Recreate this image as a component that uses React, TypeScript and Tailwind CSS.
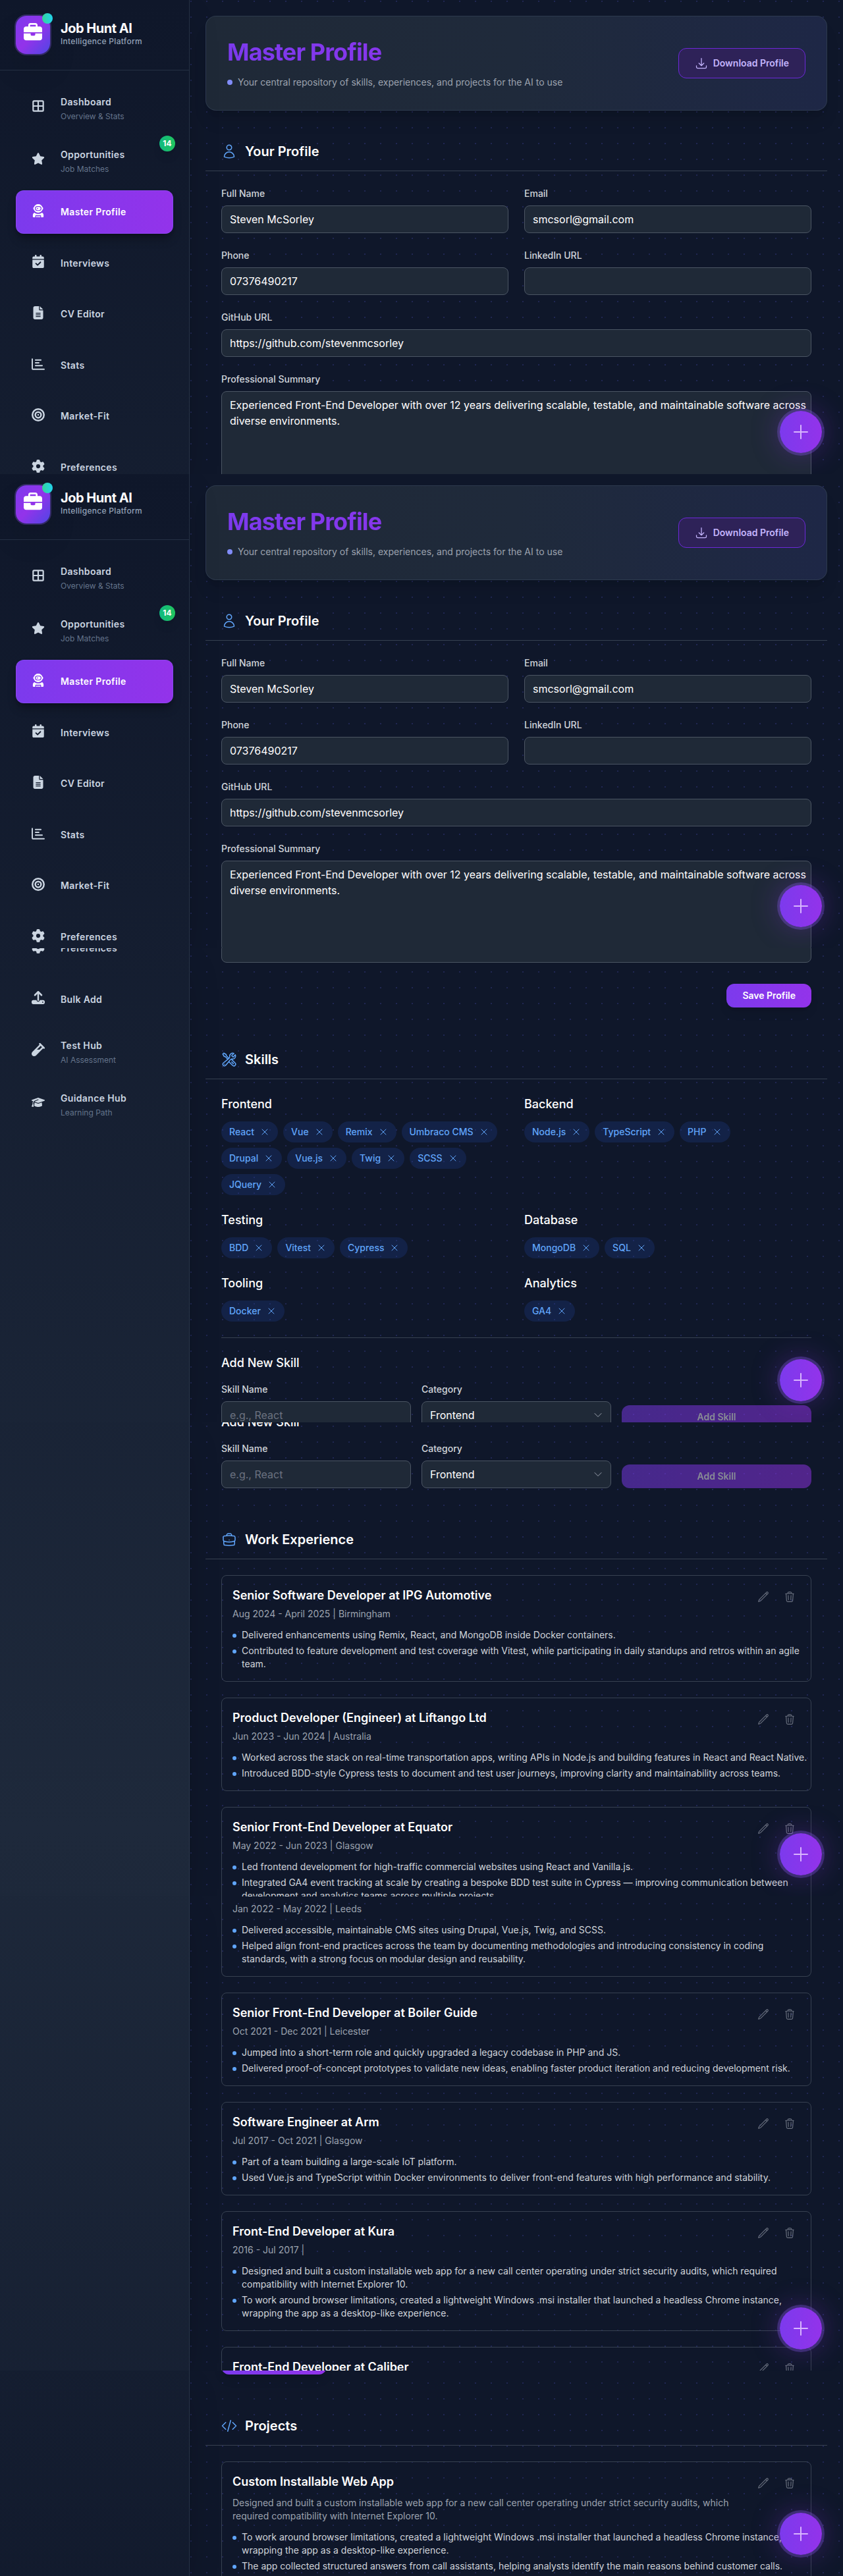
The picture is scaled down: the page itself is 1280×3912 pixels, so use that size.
import { useId, type ComponentType, type ReactNode } from "react";
import {
  FaBriefcase,
  FaBullseye,
  FaCalendarCheck,
  FaFileLines,
  FaGear,
  FaGraduationCap,
  FaStar,
  FaUpload,
  FaVial,
} from "react-icons/fa6";
import {
  HiOutlineArrowDownTray,
  HiOutlineBriefcase,
  HiOutlineChevronDown,
  HiOutlineCodeBracket,
  HiOutlinePencil,
  HiOutlinePlus,
  HiOutlineTrash,
  HiOutlineUser,
  HiOutlineWrenchScrewdriver,
  HiOutlineXMark,
} from "react-icons/hi2";

type IconComponent = ComponentType<{ className?: string }>;

function GridIcon({ className }: { className?: string }) {
  return (
    <svg viewBox="0 0 512 512" className={className} fill="none" stroke="currentColor" strokeWidth="56" aria-hidden="true">
      <rect x="60" y="60" width="392" height="392" rx="36" />
      <path d="M256 60v392M60 256h392" />
    </svg>
  );
}

function BarsIcon({ className }: { className?: string }) {
  return (
    <svg
      viewBox="0 0 512 512"
      className={className}
      fill="none"
      stroke="currentColor"
      strokeWidth="50"
      strokeLinecap="round"
      strokeLinejoin="round"
      aria-hidden="true"
    >
      <path d="M26 58v356c0 24 16 40 40 40h420M152 96h208M152 206h128M152 316h258" />
    </svg>
  );
}

function AstronautIcon({ className }: { className?: string }) {
  return (
    <svg viewBox="0 0 512 512" className={className} fill="currentColor" aria-hidden="true">
      <path
        fillRule="evenodd"
        d="M256 0c86 0 150 54 168 122 18 6 22 18 22 46s-4 40-22 46c-18 66-82 118-168 118S106 280 88 214c-18-6-22-18-22-46s4-40 22-46C106 54 170 0 256 0ZM216 76c-54 0-88 36-88 92s34 96 88 96h80c54 0 88-40 88-96s-34-92-88-92h-80Z"
      />
      <path
        fillRule="evenodd"
        d="M220 108h72c38 0 60 24 60 60s-22 66-60 66h-72c-38 0-60-30-60-66s22-60 60-60Zm8 24-12 26-26 12 26 12 12 26 12-26 26-12-26-12-12-26Z"
      />
      <path
        fillRule="evenodd"
        d="M108 330c42 34 92 48 148 48s106-14 148-48c36 16 60 52 60 96v54c0 18-14 32-32 32h-64v-64c0-12-8-20-20-20H164c-12 0-20 8-20 20v64H80c-18 0-32-14-32-32v-54c0-44 24-80 60-96Z"
      />
      <path d="M180 464h40v48h-40zM236 464h40v48h-40zM292 464h40v48h-40z" />
    </svg>
  );
}

type NavEntry = { label: string; sub?: string; icon: IconComponent; badge?: string; active?: boolean };

const primaryNav: NavEntry[] = [
  { label: "Dashboard", sub: "Overview & Stats", icon: GridIcon },
  { label: "Opportunities", sub: "Job Matches", icon: FaStar, badge: "14" },
  { label: "Master Profile", icon: AstronautIcon, active: true },
  { label: "Interviews", icon: FaCalendarCheck },
  { label: "CV Editor", icon: FaFileLines },
  { label: "Stats", icon: BarsIcon },
  { label: "Market-Fit", icon: FaBullseye },
  { label: "Preferences", icon: FaGear },
];

const secondaryNav: NavEntry[] = [
  { label: "Preferences", icon: FaGear },
  { label: "Bulk Add", icon: FaUpload },
  { label: "Test Hub", sub: "AI Assessment", icon: FaVial },
  { label: "Guidance Hub", sub: "Learning Path", icon: FaGraduationCap },
];

const skillGroups = [
  { name: "Frontend", skills: ["React", "Vue", "Remix", "Umbraco CMS", "Drupal", "Vue.js", "Twig", "SCSS", "JQuery"] },
  { name: "Backend", skills: ["Node.js", "TypeScript", "PHP"] },
  { name: "Testing", skills: ["BDD", "Vitest", "Cypress"] },
  { name: "Database", skills: ["MongoDB", "SQL"] },
  { name: "Tooling", skills: ["Docker"] },
  { name: "Analytics", skills: ["GA4"] },
];

type Job = { title: string; meta: string; points: string[] };

const recentJobs: Job[] = [
  {
    title: "Senior Software Developer at IPG Automotive",
    meta: "Aug 2024 - April 2025 | Birmingham",
    points: [
      "Delivered enhancements using Remix, React, and MongoDB inside Docker containers.",
      "Contributed to feature development and test coverage with Vitest, while participating in daily standups and retros within an agile team.",
    ],
  },
  {
    title: "Product Developer (Engineer) at Liftango Ltd",
    meta: "Jun 2023 - Jun 2024 | Australia",
    points: [
      "Worked across the stack on real-time transportation apps, writing APIs in Node.js and building features in React and React Native.",
      "Introduced BDD-style Cypress tests to document and test user journeys, improving clarity and maintainability across teams.",
    ],
  },
  {
    title: "Senior Front-End Developer at Equator",
    meta: "May 2022 - Jun 2023 | Glasgow",
    points: [
      "Led frontend development for high-traffic commercial websites using React and Vanilla.js.",
      "Integrated GA4 event tracking at scale by creating a bespoke BDD test suite in Cypress — improving communication between development and analytics teams across multiple projects.",
    ],
  },
];

const earlierJobs: Job[] = [
  {
    title: "Senior Front-End Developer at Boiler Guide",
    meta: "Oct 2021 - Dec 2021 | Leicester",
    points: [
      "Jumped into a short-term role and quickly upgraded a legacy codebase in PHP and JS.",
      "Delivered proof-of-concept prototypes to validate new ideas, enabling faster product iteration and reducing development risk.",
    ],
  },
  {
    title: "Software Engineer at Arm",
    meta: "Jul 2017 - Oct 2021 | Glasgow",
    points: [
      "Part of a team building a large-scale IoT platform.",
      "Used Vue.js and TypeScript within Docker environments to deliver front-end features with high performance and stability.",
    ],
  },
  {
    title: "Front-End Developer at Kura",
    meta: "2016 - Jul 2017 |",
    points: [
      "Designed and built a custom installable web app for a new call center operating under strict security audits, which required compatibility with Internet Explorer 10.",
      "To work around browser limitations, created a lightweight Windows .msi installer that launched a headless Chrome instance, wrapping the app as a desktop-like experience.",
    ],
  },
  { title: "Front-End Developer at Caliber", meta: "", points: [] },
];

/* ---------- Sidebar ---------- */

function NavItem({ label, sub, icon: Icon, badge, active }: NavEntry) {
  return (
    <a
      href="#"
      className={
        active
          ? "relative flex items-center gap-6 rounded-xl border border-[#8b5cf6]/40 bg-linear-to-r/srgb from-[#7c3aed] to-[#9333ea] px-[23px] py-[19px] text-white shadow-lg shadow-black/30"
          : sub
            ? "relative flex items-center gap-6 rounded-xl border border-transparent px-[23px] py-[11px] text-[#cbd5e1]"
            : "relative flex items-center gap-6 rounded-xl border border-transparent px-[23px] py-[19px] text-[#cbd5e1]"
      }
    >
      <Icon className="mb-1 size-5 shrink-0" />
      {sub ? (
        <span className="flex flex-col pt-1">
          <span className="text-sm leading-5 font-semibold tracking-wide">{label}</span>
          <span className="mt-1 text-xs leading-4 text-[#64748b]">{sub}</span>
        </span>
      ) : (
        <span className="block text-base leading-[1.6]">
          <span className="text-sm leading-none font-semibold tracking-wide">{label}</span>
        </span>
      )}
      {badge && (
        <span className="absolute -top-1 -right-1 flex size-6 items-center justify-center rounded-full bg-linear-to-r/srgb from-[#10b981] to-[#22c55e] text-xs font-bold text-white shadow-lg">
          {badge}
        </span>
      )}
    </a>
  );
}

function Brand() {
  return (
    <div className="flex items-center gap-4 border-b border-[#334155]/60 p-6">
      <div className="relative flex h-[58px] w-[52px] shrink-0 justify-center rounded-2xl bg-linear-to-br/srgb from-[#7c3aed] via-[#9333ea] to-[#4f46e5] pt-[11px] shadow-2xl ring-2 ring-[#8b5cf6]/30">
        <FaBriefcase className="size-7 text-white" />
        <span className="absolute -top-1 -right-1 size-4 rounded-full bg-linear-to-r/srgb from-[#34d399] to-[#22d3ee]" />
      </div>
      <div className="mb-1">
        <div className="text-xl leading-6 font-bold tracking-tight text-white">Job Hunt AI</div>
        <div className="text-xs leading-4 font-medium tracking-wide text-[#94a3b8]">Intelligence Platform</div>
      </div>
    </div>
  );
}

function Nav({ items }: { items: NavEntry[] }) {
  return (
    <nav className="flex flex-col gap-3 px-6">
      {items.map((item) => (
        <NavItem key={item.label} {...item} />
      ))}
    </nav>
  );
}

/* ---------- Panels ---------- */

function Panel({ position, sidebar, children, short }: { position: string; sidebar?: ReactNode; children: ReactNode; short?: boolean }) {
  return (
    <div
      className={`${short ? "h-[312px]" : "h-[720px]"} relative flex overflow-hidden bg-[radial-gradient(circle_at_2px_2px,rgba(99,102,241,0.2)_1px,transparent_0)] bg-[length:24px_24px] ${position}`}
    >
      <aside
        className={`relative z-10 w-72 shrink-0 border-r border-[#334155]/60 bg-linear-to-b/srgb from-[#0f172a] via-[#1e293b] to-[#0f172a] bg-[length:100%_3916px] shadow-2xl ${position}`}
      >
        {sidebar}
      </aside>
      <main className="min-w-0 flex-1 px-6">{children}</main>
      <button
        type="button"
        aria-label="Quick add"
        className="absolute right-8 bottom-8 z-20 flex size-16 items-center justify-center rounded-full bg-linear-to-r/srgb from-[#7c3aed] to-[#9333ea] text-[#d8b4fe] shadow-[0_0_44px_rgba(147,51,234,0.35)] ring-4 ring-[#8b5cf6]/30"
      >
        <HiOutlinePlus className="size-8" />
      </button>
    </div>
  );
}

function SectionTitle({ icon: Icon, children }: { icon: IconComponent; children: ReactNode }) {
  return (
    <div className="flex h-[60px] items-center gap-3 border-b border-[#374151] px-6">
      <Icon className="size-6 text-[#60a5fa]" />
      <h2 className="text-xl leading-7 font-semibold text-white">{children}</h2>
    </div>
  );
}

const fieldClass =
  "block w-full rounded-lg border border-[#4b5563] bg-[#1f2937] py-2 pl-3 text-base leading-6 text-white placeholder:text-[#6b7280] outline-none";
const labelClass = "mb-2 block text-sm leading-5 font-medium text-[#d1d5db]";

function Field({ label, value, placeholder, wide }: { label: string; value?: string; placeholder?: string; wide?: boolean }) {
  const id = useId();
  return (
    <div className={wide ? "col-span-2" : ""}>
      <label htmlFor={id} className={labelClass}>
        {label}
      </label>
      <input id={id} className={`${fieldClass} h-[42px] pr-3`} defaultValue={value} placeholder={placeholder} />
    </div>
  );
}

function HeroCard() {
  return (
    <header className="flex h-36 items-start justify-between rounded-2xl border border-[#334155]/70 bg-linear-to-r/srgb from-[#1f2937] via-[#1f2a3b] to-[#1e2746] px-8 shadow-xl">
      <div className="pt-[34px]">
        <h1 className="bg-linear-to-r/srgb from-[#7c3aed] to-[#9333ea] bg-clip-text text-4xl leading-10 font-bold tracking-tight text-transparent">
          Master Profile
        </h1>
        <p className="mt-4 flex items-center gap-2 text-sm leading-5 text-[#9ca3af]">
          <span className="size-2 rounded-full bg-[#818cf8]" />
          Your central repository of skills, experiences, and projects for the AI to use
        </p>
      </div>
      <button
        type="button"
        className="mt-12 flex h-[46px] items-center gap-2 rounded-xl border border-[#6d28d9] bg-[#2e2258] px-6 text-sm font-semibold text-[#c4b5fd]"
      >
        <HiOutlineArrowDownTray className="size-5" />
        Download Profile
      </button>
    </header>
  );
}

function ProfileForm() {
  const id = useId();
  return (
    <section className="mt-8">
      <SectionTitle icon={HiOutlineUser}>Your Profile</SectionTitle>
      <form className="grid grid-cols-2 gap-6 p-6">
        <Field label="Full Name" value="Steven McSorley" />
        <Field label="Email" value="smcsorl@gmail.com" />
        <Field label="Phone" value="07376490217" />
        <Field label="LinkedIn URL" />
        <Field label="GitHub URL" value="https://github.com/stevenmcsorley" wide />
        <div className="col-span-2">
          <label htmlFor={id} className={labelClass}>
            Professional Summary
          </label>
          <textarea
            id={id}
            rows={5}
            className={`${fieldClass} resize-none`}
            defaultValue="Experienced Front-End Developer with over 12 years delivering scalable, testable, and maintainable software across diverse environments."
          />
        </div>
      </form>
    </section>
  );
}

function Chip({ children }: { children: string }) {
  return (
    <li className="flex h-8 items-center gap-2 rounded-full bg-[#1e3a8a]/30 px-3 text-sm leading-5 font-medium text-[#60a5fa]">
      {children}
      <button type="button" aria-label={`Remove ${children}`}>
        <HiOutlineXMark className="size-4" />
      </button>
    </li>
  );
}

function SkillForm() {
  const id = useId();
  return (
    <form className="px-6">
      <h3 className="text-lg leading-7 font-medium text-white">Add New Skill</h3>
      <div className="mt-4 grid grid-cols-3 items-end gap-4">
        <Field label="Skill Name" placeholder="e.g., React" />
        <div>
          <label htmlFor={id} className={labelClass}>
            Category
          </label>
          <div className="relative">
            <select id={id} className={`${fieldClass} h-[42px] appearance-none pr-10`} defaultValue="Frontend">
              {skillGroups.map((g) => (
                <option key={g.name}>{g.name}</option>
              ))}
            </select>
            <HiOutlineChevronDown className="pointer-events-none absolute top-[13px] right-3 size-4 text-[#9ca3af]" />
          </div>
        </div>
        <button
          type="button"
          disabled
          className="h-9 rounded-xl bg-linear-to-r/srgb from-[#7c3aed] to-[#9333ea] text-sm font-semibold text-white opacity-50"
        >
          Add Skill
        </button>
      </div>
    </form>
  );
}

function Skills() {
  return (
    <section>
      <SectionTitle icon={HiOutlineWrenchScrewdriver}>Skills</SectionTitle>
      <div className="grid grid-cols-2 gap-6 p-6">
        {skillGroups.map((group) => (
          <div key={group.name}>
            <h3 className="mb-3 text-lg leading-7 font-medium text-white">{group.name}</h3>
            <ul className="flex flex-wrap gap-2">
              {group.skills.map((s) => (
                <Chip key={s}>{s}</Chip>
              ))}
            </ul>
          </div>
        ))}
      </div>
      <div className="mx-6 mb-6 border-t border-[#374151]" />
      <SkillForm />
    </section>
  );
}

function Points({ items }: { items: string[] }) {
  return (
    <ul className="mt-3 -mr-4 flex flex-col gap-1">
      {items.map((p) => (
        <li key={p} className="flex gap-2 text-sm leading-5 text-[#d1d5db]">
          <span className="mt-2 size-1.5 shrink-0 rounded-full bg-[#60a5fa]" />
          {p}
        </li>
      ))}
    </ul>
  );
}

function EntryCard({ title, meta, description, points }: { title: string; meta?: string; description?: string; points: string[] }) {
  return (
    <article className="rounded-lg border border-[#374151] p-4">
      <div className="flex items-start justify-between gap-4">
        <div className="min-w-0 flex-1">
          <h3 className="text-lg leading-7 font-semibold text-white">{title}</h3>
          {meta && <p className="mt-1 text-sm leading-5 text-[#9ca3af]">{meta}</p>}
          {description && <p className="mt-2 text-sm leading-5 text-[#9ca3af]">{description}</p>}
        </div>
        <div className="flex gap-2 text-[#6b7280]">
          <button type="button" aria-label={`Edit ${title}`} className="flex size-8 items-center justify-center">
            <HiOutlinePencil className="size-[18px]" />
          </button>
          <button type="button" aria-label={`Delete ${title}`} className="flex size-8 items-center justify-center">
            <HiOutlineTrash className="size-[18px]" />
          </button>
        </div>
      </div>
      <Points items={points} />
    </article>
  );
}

export default function App() {
  return (
    <div className="min-h-screen bg-[#0f172a] font-['Inter',sans-serif] text-white">
      <Panel
        position="bg-position-[0_0]"
        sidebar={
          <>
            <Brand />
            <div className="pt-[22px]">
              <Nav items={primaryNav} />
            </div>
          </>
        }
      >
        <div className="pt-6">
          <HeroCard />
          <ProfileForm />
        </div>
      </Panel>

      <Panel
        position="bg-position-[0_-7px]"
        sidebar={
          <div className="-mt-[7px]">
            <Brand />
            <div className="pt-[22px]">
              <Nav items={primaryNav} />
            </div>
          </div>
        }
      >
        <div className="pt-[17px]">
          <HeroCard />
          <ProfileForm />
        </div>
      </Panel>

      <Panel
        position="bg-position-[0_-710px]"
        sidebar={
          <div className="-mt-[33px]">
            <Nav items={secondaryNav} />
          </div>
        }
      >
        <div className="-mt-5 px-6 pb-6">
          <textarea aria-label="Summary continued" className={`${fieldClass} h-[42px] resize-none`} />
          <div className="mt-8 flex justify-end">
            <button
              type="button"
              className="h-9 rounded-xl bg-linear-to-r/srgb from-[#7c3aed] to-[#9333ea] px-6 text-sm font-semibold text-white shadow-lg"
            >
              Save Profile
            </button>
          </div>
        </div>
        <div className="pt-[25px]">
          <Skills />
        </div>
      </Panel>

      <Panel position="bg-position-[0_-1340px]">
        <div className="-mt-3.5">
          <SkillForm />
        </div>
        <section className="mt-12">
          <SectionTitle icon={HiOutlineBriefcase}>Work Experience</SectionTitle>
          <div className="flex flex-col gap-6 p-6">
            {recentJobs.map((job) => (
              <EntryCard key={job.title} {...job} />
            ))}
          </div>
        </section>
      </Panel>

      <Panel position="bg-position-[0_-2151px]">
        <section className="flex flex-col gap-6 px-6">
          <article className="rounded-b-lg border border-t-0 border-[#374151] px-4 pt-[9px] pb-4">
            <p className="text-sm leading-5 text-[#9ca3af]">Jan 2022 - May 2022 | Leeds</p>
            <Points
              items={[
                "Delivered accessible, maintainable CMS sites using Drupal, Vue.js, Twig, and SCSS.",
                "Helped align front-end practices across the team by documenting methodologies and introducing consistency in coding standards, with a strong focus on modular design and reusability.",
              ]}
            />
          </article>
          {earlierJobs.map((job) => (
            <EntryCard key={job.title} {...job} />
          ))}
        </section>
      </Panel>

      <Panel position="bg-position-[0_-3199px]" short>
        <div className="px-6">
          <button
            type="button"
            aria-label="Add experience"
            className="-mt-[30px] block h-9 w-40 rounded-xl bg-linear-to-r/srgb from-[#7c3aed] to-[#9333ea] shadow-lg"
          />
        </div>
        <section className="mt-12">
          <SectionTitle icon={HiOutlineCodeBracket}>Projects</SectionTitle>
          <div className="p-6">
            <EntryCard
              title="Custom Installable Web App"
              description="Designed and built a custom installable web app for a new call center operating under strict security audits, which required compatibility with Internet Explorer 10."
              points={[
                "To work around browser limitations, created a lightweight Windows .msi installer that launched a headless Chrome instance, wrapping the app as a desktop-like experience.",
                "The app collected structured answers from call assistants, helping analysts identify the main reasons behind customer calls.",
              ]}
            />
          </div>
        </section>
      </Panel>
    </div>
  );
}
